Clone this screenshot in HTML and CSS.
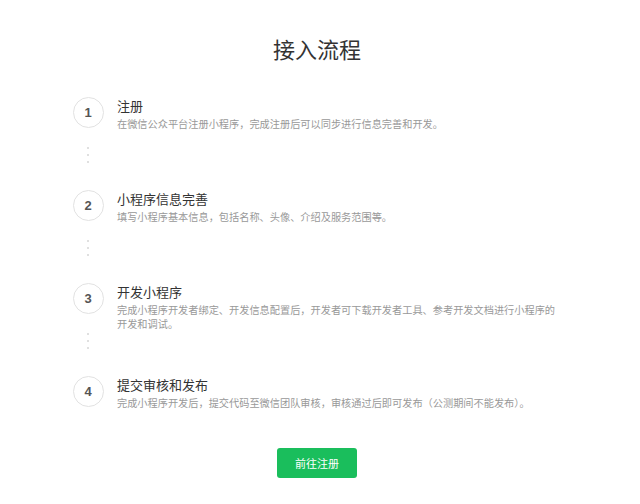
FILE: index.html
```html
<!DOCTYPE html>
<html lang="zh-CN">
<head>
  <meta charset="UTF-8">
  <title>接入流程</title>
  <link rel="stylesheet" href="styles.css">
</head>
<body>
  <div class="page">
    <h1>接入流程</h1>

    <ul class="steps">
      <li class="step">
        <div class="step-mark">
          <span class="num">1</span>
          <span class="dots"><i></i><i></i><i></i></span>
        </div>
        <div class="step-text">
          <h3>注册</h3>
          <p>在微信公众平台注册小程序，完成注册后可以同步进行信息完善和开发。</p>
        </div>
      </li>
      <li class="step">
        <div class="step-mark">
          <span class="num">2</span>
          <span class="dots"><i></i><i></i><i></i></span>
        </div>
        <div class="step-text">
          <h3>小程序信息完善</h3>
          <p>填写小程序基本信息，包括名称、头像、介绍及服务范围等。</p>
        </div>
      </li>
      <li class="step">
        <div class="step-mark">
          <span class="num">3</span>
          <span class="dots"><i></i><i></i><i></i></span>
        </div>
        <div class="step-text">
          <h3>开发小程序</h3>
          <p>完成小程序开发者绑定、开发信息配置后，开发者可下载开发者工具、参考开发文档进行小程序的开发和调试。</p>
        </div>
      </li>
      <li class="step last">
        <div class="step-mark">
          <span class="num">4</span>
        </div>
        <div class="step-text">
          <h3>提交审核和发布</h3>
          <p>完成小程序开发后，提交代码至微信团队审核，审核通过后即可发布（公测期间不能发布）。</p>
        </div>
      </li>
    </ul>

    <div class="actions">
      <a class="btn" href="#">前往注册</a>
    </div>
  </div>
</body>
</html>
```

FILE: styles.css
```css
body {
  margin: 0;
  background: #fff;
  font-family: "Noto Sans CJK SC", "Noto Sans", sans-serif;
  color: #333;
}

.page {
  width: 640px;
  padding-right: 6px;
  box-sizing: border-box;
}

h1 {
  margin: 33px 0 0;
  font-size: 22px;
  line-height: 30px;
  font-weight: normal;
  text-align: center;
  color: #333;
}

.steps {
  list-style: none;
  width: 496px;
  margin: 34px auto 0;
  padding: 0 0 0 6px;
}

.step {
  display: flex;
  height: 93px;
}

.step.last {
  height: 32px;
}

.step-mark {
  width: 32px;
  display: flex;
  flex-direction: column;
  align-items: center;
}

.num {
  width: 29px;
  height: 29px;
  border: 1.5px solid #e2e2e2;
  border-radius: 50%;
  display: flex;
  align-items: center;
  justify-content: center;
  font-family: "Liberation Sans", Arial, sans-serif;
  font-size: 13px;
  font-weight: bold;
  color: #555;
}

.dots {
  display: flex;
  flex-direction: column;
  gap: 5px;
  margin-top: 19px;
}

.dots i {
  width: 2px;
  height: 2px;
  border-radius: 50%;
  background: #d6d6d6;
}

.step-text {
  margin-left: 13px;
  width: 440px;
}

.step-text h3 {
  margin: 0;
  font-size: 13px;
  line-height: 18px;
  font-weight: normal;
  color: #333;
}

.step-text p {
  margin: 2px 0 0;
  font-size: 10.2px;
  line-height: 14px;
  color: #999;
}

.actions {
  margin-top: 40px;
  text-align: center;
}

.btn {
  display: inline-block;
  width: 80px;
  height: 30px;
  line-height: 30px;
  background: #1abe5c;
  color: #fff;
  font-size: 11px;
  border-radius: 3px;
  text-decoration: none;
}
```
